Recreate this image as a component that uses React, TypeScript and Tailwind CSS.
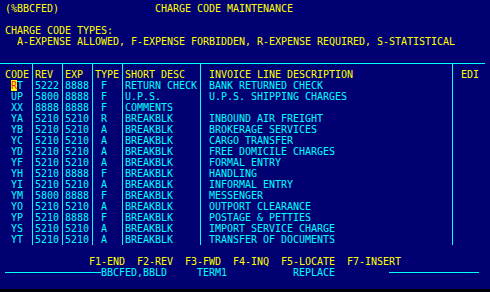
type Row = {
  code: string
  rev: string
  exp: string
  type: string
  short: string
  desc: string
}

const rows: Row[] = [
  { code: 'RT', rev: '5222', exp: '8888', type: 'F', short: 'RETURN CHECK', desc: 'BANK RETURNED CHECK' },
  { code: 'UP', rev: '5800', exp: '8888', type: 'F', short: 'U.P.S.', desc: 'U.P.S. SHIPPING CHARGES' },
  { code: 'XX', rev: '8888', exp: '8888', type: 'F', short: 'COMMENTS', desc: '' },
  { code: 'YA', rev: '5210', exp: '5210', type: 'R', short: 'BREAKBLK', desc: 'INBOUND AIR FREIGHT' },
  { code: 'YB', rev: '5210', exp: '5210', type: 'A', short: 'BREAKBLK', desc: 'BROKERAGE SERVICES' },
  { code: 'YC', rev: '5210', exp: '5210', type: 'A', short: 'BREAKBLK', desc: 'CARGO TRANSFER' },
  { code: 'YD', rev: '5210', exp: '5210', type: 'A', short: 'BREAKBLK', desc: 'FREE DOMICILE CHARGES' },
  { code: 'YF', rev: '5210', exp: '5210', type: 'A', short: 'BREAKBLK', desc: 'FORMAL ENTRY' },
  { code: 'YH', rev: '5210', exp: '8888', type: 'F', short: 'BREAKBLK', desc: 'HANDLING' },
  { code: 'YI', rev: '5210', exp: '5210', type: 'A', short: 'BREAKBLK', desc: 'INFORMAL ENTRY' },
  { code: 'YM', rev: '5800', exp: '8888', type: 'F', short: 'BREAKBLK', desc: 'MESSENGER' },
  { code: 'YO', rev: '5210', exp: '5210', type: 'A', short: 'BREAKBLK', desc: 'OUTPORT CLEARANCE' },
  { code: 'YP', rev: '5210', exp: '8888', type: 'F', short: 'BREAKBLK', desc: 'POSTAGE & PETTIES' },
  { code: 'YS', rev: '5210', exp: '5210', type: 'A', short: 'BREAKBLK', desc: 'IMPORT SERVICE CHARGE' },
  { code: 'YT', rev: '5210', exp: '5210', type: 'A', short: 'BREAKBLK', desc: 'TRANSFER OF DOCUMENTS' },
]

const cell = 'h-full border-l border-[#00ffff] pl-[2px]'

function TableRow({ r, first }: { r: Row; first: boolean }) {
  return (
    <div className="flex h-[11px] pl-[5px] text-[#00ffff]">
      <div className="w-[27px]">
        {' '}
        {first ? (
          <>
            <span className="inline-block h-[11px] w-[6px] bg-[#ffff00] align-top text-[#ff1a1a]">{r.code[0]}</span>
            {r.code[1]}
          </>
        ) : (
          r.code
        )}
      </div>
      <div className={`w-[30px] ${cell}`}>{r.rev}</div>
      <div className={`w-[30px] ${cell}`}>{r.exp}</div>
      <div className={`w-[30px] ${cell}`}>{' ' + r.type}</div>
      <div className={`w-[78px] ${cell}`}>{r.short}</div>
      <div className={`w-[252px] ${cell}`}>{' ' + r.desc}</div>
      <div className={`w-[33px] ${cell}`}></div>
    </div>
  )
}

export default function App() {
  return (
    <div className="h-[292px] w-[490px] overflow-hidden bg-black">
      <div
        className="h-[289px] whitespace-pre bg-[#000073] pt-[3px] text-[10px] leading-[11px] tracking-[-0.02px] text-[#ffff00]"
        style={{ fontFamily: '"DejaVu Sans Mono", "Liberation Mono", monospace' }}
      >
        <div className="h-[11px] pl-[5px]">{'(%BBCFED)                CHARGE CODE MAINTENANCE'}</div>
        <div className="h-[11px]" />
        <div className="h-[11px] pl-[5px]">CHARGE CODE TYPES:</div>
        <div className="h-[11px] pl-[5px]">
          {'  A-EXPENSE ALLOWED, F-EXPENSE FORBIDDEN, R-EXPENSE REQUIRED, S-STATISTICAL'}
        </div>
        <div className="h-[11px]" />
        <div className="h-[5px]" />

        {/* table */}
        <div className="w-[485px] border-t border-[#00ffff]">
          <div className="flex h-[16px] pl-[5px]">
            <div className="w-[27px] pt-[5px]">CODE</div>
            <div className={`w-[30px] pt-[5px] ${cell}`}>REV</div>
            <div className={`w-[30px] pt-[5px] ${cell}`}>EXP</div>
            <div className={`w-[30px] pt-[5px] ${cell}`}>TYPE</div>
            <div className={`w-[78px] pt-[5px] ${cell}`}>SHORT DESC</div>
            <div className={`w-[252px] pt-[5px] ${cell}`}>{' INVOICE LINE DESCRIPTION'}</div>
            <div className={`w-[33px] pt-[5px] ${cell}`}>{' EDI'}</div>
          </div>
          {rows.map((r, i) => (
            <TableRow key={r.code} r={r} first={i === 0} />
          ))}
        </div>

        <div className="h-[11px]" />
        <div className="h-[11px] pl-[5px]">
          {'              F1-END  F2-REV  F3-FWD  F4-INQ  F5-LOCATE  F7-INSERT'}
        </div>
        <div className="flex h-[11px] items-center pl-[5px] text-[#00ffff]">
          <div className="h-px w-[96px] bg-[#00ffff]" />
          <span className="leading-[11px]">{'BBCFED,BBLD     TERM1           REPLACE         '}</span>
          <div className="h-px w-[90px] bg-[#00ffff]" />
        </div>
      </div>
    </div>
  )
}
